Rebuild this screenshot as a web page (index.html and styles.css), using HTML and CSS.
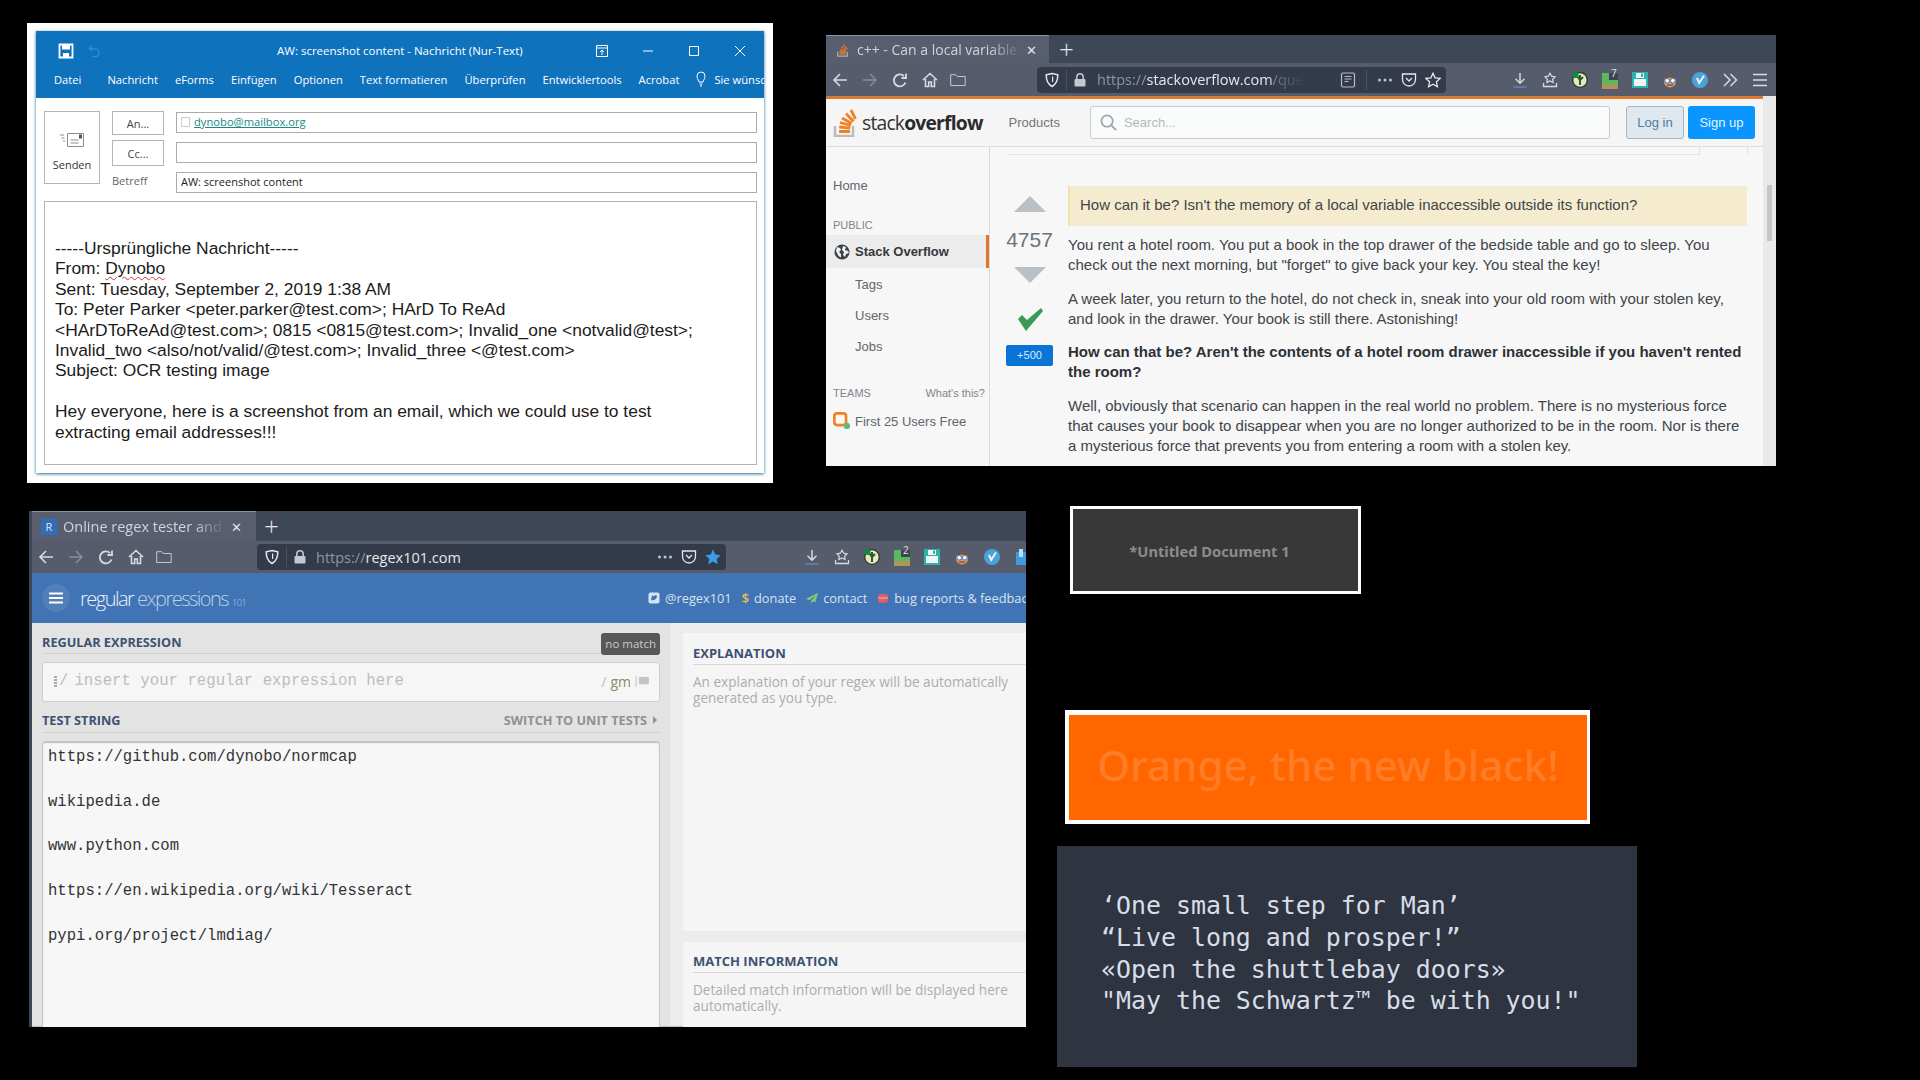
FILE: index.html
```html
<!DOCTYPE html>
<html lang="en">
<head>
  <meta charset="UTF-8" />
  <title>Screenshot content</title>
  <link rel="stylesheet" href="styles.css">
</head>
<body>
  <!-- shared icons -->
  <svg class="defs" width="0" height="0">
    <symbol id="i-back" viewBox="0 0 16 16"><path d="M15 8H2M8 2L2 8l6 6" fill="none" stroke="currentColor" stroke-width="1.6"/></symbol>
    <symbol id="i-forward" viewBox="0 0 16 16"><path d="M1 8h13M8 2l6 6-6 6" fill="none" stroke="currentColor" stroke-width="1.4"/></symbol>
    <symbol id="i-reload" viewBox="0 0 16 16"><path d="M13.5 10.5A6 6 0 1 1 12 4M9.5 6H14V1.5" fill="none" stroke="currentColor" stroke-width="1.8"/></symbol>
    <symbol id="i-home" viewBox="0 0 16 16"><path d="M1 8l7-6.5L15 8M3.5 7v7.5h3.2V10h2.6v4.5h3.200V7" fill="none" stroke="currentColor" stroke-width="1.6"/></symbol>
    <symbol id="i-folder" viewBox="0 0 16 16"><path d="M.7 2.700h5l1.500 1.800h8v9H.7z" fill="none" stroke="currentColor" stroke-width="1"/></symbol>
    <symbol id="i-shield" viewBox="0 0 16 16"><path d="M8 1.500l5.800 1.300c0 5.500-1.500 9.500-5.800 11.700C3.700 12.300 2.200 8.300 2.200 2.800z" fill="none" stroke="currentColor" stroke-width="1.500"/><path d="M8 4.500h1.200v5.500H8z" fill="currentColor"/></symbol>
    <symbol id="i-lock" viewBox="0 0 16 16"><path d="M4.800 7V5a3.200 3.200 0 0 1 6.400 0v2" fill="none" stroke="currentColor" stroke-width="1.500"/><rect x="2.500" y="7" width="11" height="7.500" rx="1" fill="currentColor"/></symbol>
    <symbol id="i-dots" viewBox="0 0 16 16"><circle cx="2.500" cy="8" r="1.500" fill="currentColor"/><circle cx="8" cy="8" r="1.500" fill="currentColor"/><circle cx="13.500" cy="8" r="1.500" fill="currentColor"/></symbol>
    <symbol id="i-pocket" viewBox="0 0 16 16"><path d="M1.500 2h13v5.500a6.500 6.500 0 0 1-13 0z" fill="none" stroke="currentColor" stroke-width="1.300"/><path d="M5 6l3 3 3-3" fill="none" stroke="currentColor" stroke-width="1.300"/></symbol>
    <symbol id="i-star" viewBox="0 0 16 16"><path d="M8 1.200l2.100 4.600 5 .6-3.700 3.400 1 4.900L8 12.300 3.600 14.700l1-4.900L.9 6.400l5-.6z" fill="none" stroke="currentColor" stroke-width="1.300"/></symbol>
    <symbol id="i-star-full" viewBox="0 0 16 16"><path d="M8 .6l2.300 4.900 5.300.7-3.900 3.700 1 5.300L8 12.600l-4.700 2.600 1-5.300L.4 6.200l5.300-.7z" fill="currentColor"/></symbol>
    <symbol id="i-reader" viewBox="0 0 16 16"><rect x="1.500" y="1" width="13" height="14" rx="1.500" fill="none" stroke="currentColor" stroke-width="1.200"/><path d="M4.500 4.500h7M4.500 7h7M4.500 9.500h4" stroke="currentColor" stroke-width="1"/></symbol>
    <symbol id="i-download" viewBox="0 0 16 16"><path d="M8 1v10M3.500 6.800L8 11.300l4.500-4.500" fill="none" stroke="#d7dae0" stroke-width="1.500"/><path d="M1.500 15h13" stroke="#5a8fc8" stroke-width="1.300"/></symbol>
    <symbol id="i-library" viewBox="0 0 16 16"><path d="M8 1.200l1.700 3 3.300.6-2.300 2.500.4 3.200L8 9l-3.100 1.500.4-3.200L3 4.800l3.300-.6z" fill="none" stroke="#d7dae0" stroke-width="1.200"/><path d="M1.500 11v3.500h13V11" fill="none" stroke="#d7dae0" stroke-width="1.300"/></symbol>
    <symbol id="i-ext-green" viewBox="0 0 16 16"><circle cx="8" cy="8" r="7.300" fill="#e8e6c8"/><circle cx="8" cy="8" r="7.300" fill="none" stroke="#2e3a20" stroke-width="1.300"/><path d="M8 3v10M5 4l3 4 3-3" fill="none" stroke="#2c5a28" stroke-width="2"/><circle cx="3.500" cy="3" r="3" fill="#0d8a43"/></symbol>
    <symbol id="i-ext-blocks" viewBox="0 0 16 16"><path d="M0 0h8v7h8v9H0z" fill="#5cb85c"/><path d="M0 11h16v5H0z" fill="#c98a5c" opacity=".75"/><rect x="7" y="-1" width="9" height="8" fill="#3d4452"/></symbol>
    <symbol id="i-ext-save" viewBox="0 0 16 16"><path d="M0 0h16v16H0z" fill="#2bb4a8"/><path d="M2 7h12v7H2z" fill="#f1f5f7"/><path d="M4 1h8v5H4z" fill="#f1f5f7"/><path d="M9 1.500h2v3.500H9z" fill="#2bb4a8"/></symbol>
    <symbol id="i-ext-nerd" viewBox="0 0 16 16"><circle cx="8" cy="9.500" r="6" fill="#d69a6a"/><path d="M2.500 6.500C3 2.500 13 2.500 13.500 6.500 10 5 6 5 2.500 6.500z" fill="#7a4a28"/><circle cx="5.200" cy="8.700" r="2.300" fill="#fff" stroke="#3a7bd0"/><circle cx="10.800" cy="8.700" r="2.300" fill="#fff" stroke="#3a7bd0"/><path d="M5 13h6" stroke="#8a3b2a" stroke-width="1.200"/></symbol>
    <symbol id="i-ext-v" viewBox="0 0 16 16"><circle cx="8" cy="8" r="8" fill="#4aa3d8"/><path d="M5 6l2.200 5L12 3.500" fill="none" stroke="#eaf4fb" stroke-width="2"/></symbol>
    <symbol id="i-ext-cube" viewBox="0 0 16 16"><path d="M2 3h12v13H2z" fill="#3d9be0"/><path d="M5 0h4v8H5z" fill="#b9def7"/></symbol>
    <symbol id="i-chevrons" viewBox="0 0 16 16"><path d="M2 2l6 6-6 6M8.500 2l6 6-6 6" fill="none" stroke="#d7dae0" stroke-width="1.500"/></symbol>
    <symbol id="i-menu" viewBox="0 0 16 16"><path d="M1 2.500h14M1 8h14M1 13.500h14" stroke="#d7dae0" stroke-width="1.600"/></symbol>
  </svg>

  <div class="desktop">

    <!-- Outlook message -->
    <section class="mail-frame">
      <div class="mail-window">
        <div class="mail-title">
          <svg class="mail-save" viewBox="0 0 16 16"><path d="M1.500 1.500h13v13h-13z" fill="none" stroke="#fff" stroke-width="1.800"/><path d="M4 2h8v4.500H4zM5 10h6v4.500H5z" fill="#fff"/></svg>
          <svg class="mail-undo" viewBox="0 0 16 16"><path d="M4 2L1.500 5.500 5 8M2 5.500h6a4.500 4.500 0 0 1 0 9H5" fill="none" stroke="#2f8fd8" stroke-width="1.500"/></svg>
          <span class="mail-title-text">AW: screenshot content - Nachricht (Nur-Text)</span>
          <svg class="win-btn win-ribbon" viewBox="0 0 12 12"><path d="M.5.500h11v11H.5zM.5 3h11M6 10V5M4 7l2-2 2 2" fill="none" stroke="#fff"/></svg>
          <svg class="win-btn win-min" viewBox="0 0 12 12"><path d="M1 6h10" stroke="#fff"/></svg>
          <svg class="win-btn win-max" viewBox="0 0 12 12"><path d="M1.500 1.500h9v9h-9z" fill="none" stroke="#fff"/></svg>
          <svg class="win-btn win-close" viewBox="0 0 12 12"><path d="M1 1l10 10M11 1L1 11" stroke="#fff"/></svg>
        </div>
        <nav class="mail-menu">
          <span class="file-tab">Datei</span>
          <span>Nachricht</span>
          <span>eForms</span>
          <span>Einfügen</span>
          <span>Optionen</span>
          <span>Text formatieren</span>
          <span>Überprüfen</span>
          <span>Entwicklertools</span>
          <span>Acrobat</span>
          <span class="tell-me">
            <svg viewBox="0 0 10 16"><path d="M3 11C2 8 1 7.500 1 5a4 4 0 0 1 8 0c0 2.500-1 3-2 6zM3.500 13h3M4 15h2" fill="none" stroke="#fff"/></svg>
            Sie wünsche
          </span>
        </nav>
        <div class="compose">
          <div class="compose-head">
            <div class="send-btn">
              <svg viewBox="0 0 24 16"><path d="M7.500 1.500h16v13h-16z" fill="#fff" stroke="#8a8a8a"/><path d="M10.500 8h8M10.500 11h8" stroke="#8a8a8a"/><rect x="19" y="2.500" width="3" height="4" fill="#555"/><path d="M0 3h4M1.500 6h3M3 9h2" stroke="#8a8a8a"/></svg>
              <span>Senden</span>
            </div>
            <div class="addr-grid">
              <button class="addr-btn addr-to">An...</button>
              <div class="addr-field"><i class="addr-check"></i><a class="addr-link">dynobo@mailbox.org</a></div>
              <button class="addr-btn addr-cc">Cc...</button>
              <div class="addr-field"></div>
              <span class="addr-label">Betreff</span>
              <div class="addr-field">AW: screenshot content</div>
            </div>
          </div>
          <div class="mail-body">
            -----Ursprüngliche Nachricht-----<br>
            From: <span class="spell">Dynobo</span><br>
            Sent: Tuesday, September 2, 2019 1:38 AM<br>
            To: Peter Parker &lt;peter.parker@test.com&gt;; HArD To ReAd<br>
            &lt;HArDToReAd@test.com&gt;; 0815 &lt;0815@test.com&gt;; Invalid_one &lt;notvalid@test&gt;;<br>
            Invalid_two &lt;also/not/valid/@test.com&gt;; Invalid_three &lt;@test.com&gt;<br>
            Subject: OCR testing image<br>
            <br>
            Hey everyone, here is a screenshot from an email, which we could use to test<br>
            extracting email addresses!!!
          </div>
        </div>
      </div>
    </section>

    <!-- Firefox: stack overflow -->
    <section class="browser browser-so">
      <div class="tabstrip">
        <div class="tab">
          <svg class="tab-icon" viewBox="0 0 16 16"><path d="M2 10v5h11v-5" fill="none" stroke="#a9acb0" stroke-width="1.500"/><path d="M4 12.500h7M4 10l7 .8M4.500 7.500l6.800 2M6 4.500l6 3.500M8.500 2l4.500 5" stroke="#d8792f" stroke-width="1.600"/></svg>
          <span class="tab-text">c++ - Can a local variable</span>
          <span class="tab-close">✕</span>
        </div>
        <span class="tab-new">+</span>
      </div>
      <div class="toolbar">
        <svg class="ico"><use href="#i-back"/></svg>
        <svg class="ico ico-dim"><use href="#i-forward"/></svg>
        <svg class="ico"><use href="#i-reload"/></svg>
        <svg class="ico"><use href="#i-home"/></svg>
        <svg class="ico ico-folder"><use href="#i-folder"/></svg>
        <div class="urlbar">
          <svg class="ico"><use href="#i-shield"/></svg>
          <i class="url-sep"></i>
          <svg class="ico ico-lock"><use href="#i-lock"/></svg>
          <span class="url-text"><span class="url-scheme">https://</span>stackoverflow.com<span class="url-scheme">/ques</span></span>
          <svg class="ico ico-reader"><use href="#i-reader"/></svg>
          <i class="url-sep url-sep-right"></i>
          <svg class="ico ico-dots"><use href="#i-dots"/></svg>
          <svg class="ico"><use href="#i-pocket"/></svg>
          <svg class="ico"><use href="#i-star"/></svg>
        </div>
        <div class="ext-icons">
          <svg class="ico"><use href="#i-download"/></svg>
          <svg class="ico"><use href="#i-library"/></svg>
          <svg class="ico"><use href="#i-ext-green"/></svg>
          <span class="ext-badge"><svg class="ico"><use href="#i-ext-blocks"/></svg><b>7</b></span>
          <svg class="ico"><use href="#i-ext-save"/></svg>
          <svg class="ico"><use href="#i-ext-nerd"/></svg>
          <svg class="ico"><use href="#i-ext-v"/></svg>
          <svg class="ico"><use href="#i-chevrons"/></svg>
          <svg class="ico"><use href="#i-menu"/></svg>
        </div>
      </div>
      <div class="so-page">
        <div class="so-content">
          <header class="so-header">
            <svg class="so-mark" viewBox="0 0 24 30"><path d="M2 19v10h18V19" fill="none" stroke="#bcbbbb" stroke-width="2.500"/><path d="M6 24.500h11M6.200 20l11 1.200M7 15.500l10.800 3M9 11l9.500 5.500M13 6.500l7.500 8M18 3l4.500 9" stroke="#f48024" stroke-width="2.800"/></svg>
            <span class="so-word">stack<b>overflow</b></span>
            <span class="so-products">Products</span>
            <div class="so-search">
              <svg viewBox="0 0 18 18"><circle cx="7.500" cy="7.500" r="6" fill="none" stroke="#9fa6ad" stroke-width="1.800"/><path d="M12 12l5 5" stroke="#9fa6ad" stroke-width="2"/></svg>
              <span>Search...</span>
            </div>
            <span class="so-btn so-login">Log in</span>
            <span class="so-btn so-signup">Sign up</span>
          </header>
          <div class="so-columns">
            <aside class="so-side">
              <div class="side-item side-home">Home</div>
              <div class="side-label side-public">PUBLIC</div>
              <div class="side-current">
                <svg viewBox="0 0 16 16"><circle cx="8" cy="8" r="7.500" fill="#3c4146"/><path d="M3 3l3 1 1 2-2 2 2 2v3.500L4.500 12 2 7zM9 2l3 1-1 3 3 1 1 2-3 1-1 3-2-2 1-3-2-2z" fill="#f1f2f3"/></svg>
                Stack Overflow
              </div>
              <div class="side-item side-sub">Tags</div>
              <div class="side-item side-sub">Users</div>
              <div class="side-item side-sub">Jobs</div>
              <div class="side-label side-teams"><span>TEAMS</span><span class="side-whats">What's this?</span></div>
              <div class="side-team">
                <svg viewBox="0 0 20 20"><rect x="1.500" y="1.500" width="13" height="13" rx="3" fill="none" stroke="#f48024" stroke-width="3"/><circle cx="15.500" cy="15.500" r="3.500" fill="#5eba7d"/></svg>
                First 25 Users Free
              </div>
            </aside>
            <main class="so-main">
              <div class="prev-edge"></div>
              <div class="so-post">
                <div class="vote-col">
                  <i class="vote-up"></i>
                  <div class="vote-count">4757</div>
                  <i class="vote-down"></i>
                  <svg class="vote-check" viewBox="0 0 26 24"><path d="M1 12l8 12L26 4 24 1 10 13 5 8z" fill="#3a9a56"/></svg>
                  <div class="vote-bounty">+500</div>
                </div>
                <div class="post-text">
                  <blockquote class="post-quote">How can it be? Isn't the memory of a local variable inaccessible outside its function?</blockquote>
                  <p>You rent a hotel room. You put a book in the top drawer of the bedside table and go to sleep. You<br>check out the next morning, but "forget" to give back your key. You steal the key!</p>
                  <p>A week later, you return to the hotel, do not check in, sneak into your old room with your stolen key,<br>and look in the drawer. Your book is still there. Astonishing!</p>
                  <p><strong>How can that be? Aren't the contents of a hotel room drawer inaccessible if you haven't rented<br>the room?</strong></p>
                  <p>Well, obviously that scenario can happen in the real world no problem. There is no mysterious force<br>that causes your book to disappear when you are no longer authorized to be in the room. Nor is there<br>a mysterious force that prevents you from entering a room with a stolen key.</p>
                </div>
              </div>
            </main>
          </div>
        </div>
        <div class="so-scroll"><i></i></div>
      </div>
    </section>

    <!-- Firefox: regex101 -->
    <section class="browser browser-regex">
      <div class="tabstrip">
        <div class="tab">
          <span class="tab-r">R</span>
          <span class="tab-text">Online regex tester and debugger</span>
          <span class="tab-close">✕</span>
        </div>
        <span class="tab-new">+</span>
      </div>
      <div class="toolbar">
        <svg class="ico"><use href="#i-back"/></svg>
        <svg class="ico ico-dim"><use href="#i-forward"/></svg>
        <svg class="ico"><use href="#i-reload"/></svg>
        <svg class="ico"><use href="#i-home"/></svg>
        <svg class="ico ico-folder"><use href="#i-folder"/></svg>
        <div class="urlbar">
          <svg class="ico"><use href="#i-shield"/></svg>
          <i class="url-sep"></i>
          <svg class="ico ico-lock"><use href="#i-lock"/></svg>
          <span class="url-text"><span class="url-scheme">https://</span>regex101.com</span>
          <svg class="ico ico-dots"><use href="#i-dots"/></svg>
          <svg class="ico"><use href="#i-pocket"/></svg>
          <svg class="ico ico-star-on"><use href="#i-star-full"/></svg>
        </div>
        <div class="ext-icons">
          <svg class="ico"><use href="#i-download"/></svg>
          <svg class="ico"><use href="#i-library"/></svg>
          <svg class="ico"><use href="#i-ext-green"/></svg>
          <span class="ext-badge"><svg class="ico"><use href="#i-ext-blocks"/></svg><b>2</b></span>
          <svg class="ico"><use href="#i-ext-save"/></svg>
          <svg class="ico"><use href="#i-ext-nerd"/></svg>
          <svg class="ico"><use href="#i-ext-v"/></svg>
          <svg class="ico"><use href="#i-ext-cube"/></svg>
        </div>
      </div>
      <header class="rx-header">
        <span class="rx-burger"><svg viewBox="0 0 14 12"><path d="M0 1.500h14M0 6h14M0 10.500h14" stroke="#fff" stroke-width="2"/></svg></span>
        <span class="rx-logo"><span class="rx-logo-strong">regular</span> expressions <small>101</small></span>
        <span class="rx-links">
          <span class="rx-link"><svg viewBox="0 0 12 12"><rect x=".500" y=".500" width="11" height="11" rx="2" fill="#d6e4f3"/><path d="M3 8c3 1 6-1 6-4L8 3 6 4 4 3.500z" fill="#4174b5"/></svg>@regex101</span>
          <span class="rx-link"><b class="rx-dollar">$</b>donate</span>
          <span class="rx-link"><svg viewBox="0 0 14 12"><path d="M14 0L0 7l4 1.500L11 3 6 9.500V12l2.500-2L11 11z" fill="#7fc77f"/></svg>contact</span>
          <span class="rx-link"><svg viewBox="0 0 12 12"><rect x="1" y="2" width="10" height="9" rx="3" fill="#d9606a"/><path d="M1 6h10" stroke="#f2b3b8"/></svg>bug reports &amp; feedback</span>
        </span>
      </header>
      <div class="rx-columns">
        <div class="rx-left">
          <div class="rx-head">
            <h3>REGULAR EXPRESSION</h3>
            <span class="rx-nomatch">no match</span>
          </div>
          <div class="rx-input">
            <i class="rx-grip"></i>
            <span class="rx-delim">/</span>
            <span class="rx-placeholder">insert your regular expression here</span>
            <span class="rx-flags"><span class="rx-delim">/</span> <span class="rx-gm">gm</span>
              <svg viewBox="0 0 16 12"><path d="M1 0v12" stroke="#bbb"/><path d="M4 1h11v8H4z" fill="#c4c4c4"/></svg>
            </span>
          </div>
          <div class="rx-head rx-head-test">
            <h3>TEST STRING</h3>
            <span class="rx-switch">SWITCH TO UNIT TESTS <i></i></span>
          </div>
          <div class="rx-test">https://github.com/dynobo/normcap

wikipedia.de

www.python.com

https://en.wikipedia.org/wiki/Tesseract

pypi.org/project/lmdiag/</div>
        </div>
        <div class="rx-right">
          <div class="rx-card rx-card-explain">
            <h3>EXPLANATION</h3>
            <p>An explanation of your regex will be automatically<br>generated as you type.</p>
          </div>
          <div class="rx-card rx-card-match">
            <h3>MATCH INFORMATION</h3>
            <p>Detailed match information will be displayed here<br>automatically.</p>
          </div>
        </div>
      </div>
    </section>

    <section class="doc-tile">*Untitled Document 1</section>
    <section class="orange-tile">Orange, the new black!</section>
    <section class="quote-tile">‘One small step for Man’<br>“Live long and prosper!”<br>«Open the shuttlebay doors»<br>"May the Schwartz™ be with you!"</section>

  </div>
</body>
</html>
```

FILE: styles.css
```css
* {
  box-sizing: border-box;
}
body {
  margin: 0;
  background: #000;
  font-family: 'Liberation Sans', sans-serif;
}
.defs {
  position: absolute;
}
.desktop {
  position: relative;
  width: 1920px;
  height: 1080px;
  overflow: hidden;
}

/* Outlook */
.mail-frame {
  position: absolute;
  left: 27px;
  top: 23px;
  width: 746px;
  height: 460px;
  background: #fff;
  padding: 8px 9px 10px;
}
.mail-window {
  height: 100%;
  background: #fff;
  box-shadow: 0 1px 3px rgba(20, 90, 140, 0.9);
  font-family: 'Open Sans', sans-serif;
}
.mail-title {
  display: flex;
  align-items: center;
  height: 39px;
  background: #0f72bd;
  color: #fff;
  position: relative;
}
.mail-save {
  width: 16px;
  height: 16px;
  margin-left: 22px;
}
.mail-undo {
  width: 14px;
  height: 14px;
  margin-left: 14px;
}
.mail-title-text {
  position: absolute;
  left: 241px;
  top: 12px;
  font-size: 11.5px;
  line-height: 16px;
}
.win-btn {
  width: 12px;
  height: 12px;
}
.win-ribbon {
  margin-left: auto;
  margin-right: 34px;
}
.win-min,
.win-max {
  margin-right: 34px;
}
.win-close {
  margin-right: 18px;
}
.mail-menu {
  display: flex;
  align-items: center;
  gap: 17px;
  height: 28px;
  padding: 0 0 10px 18px;
  background: #0f72bd;
  color: #fff;
  font-size: 11.2px;
  white-space: nowrap;
  overflow: hidden;
}
.file-tab {
  margin-right: 9px;
}
.tell-me {
  display: flex;
  align-items: center;
  gap: 8px;
}
.tell-me svg {
  width: 10px;
  height: 16px;
}
.compose {
  padding: 12px 7px 0 8px;
}
.compose-head {
  display: flex;
  gap: 12px;
}
.send-btn {
  display: flex;
  flex-direction: column;
  align-items: center;
  width: 56px;
  height: 73px;
  margin-top: 1px;
  border: 1px solid #b5b5b5;
  font-size: 11px;
  color: #333;
}
.send-btn svg {
  width: 24px;
  height: 16px;
  margin-top: 20px;
}
.send-btn span {
  margin-top: 9px;
}
.addr-grid {
  flex: 1;
  display: grid;
  grid-template-columns: 52px 581px;
  grid-auto-rows: 30px;
  column-gap: 12px;
}
.addr-btn {
  padding: 0;
  background: #fff;
  border: 1px solid #b5b5b5;
  font: 11px 'Open Sans', sans-serif;
  color: #444;
}
.addr-to {
  height: 24px;
  margin-top: 1px;
}
.addr-cc {
  height: 26px;
}
.addr-field {
  display: flex;
  align-items: center;
  height: 21px;
  margin-top: 2px;
  padding: 0 0 2px 4px;
  border: 1px solid #ababab;
  font-size: 11px;
  color: #222;
}
.addr-check {
  width: 9px;
  height: 10px;
  margin-right: 4px;
  border: 1px solid #ccc;
}
.addr-link {
  color: #1b8a86;
  font-size: 11.2px;
  text-decoration: underline;
}
.addr-label {
  padding-top: 3px;
  font-size: 11px;
  color: #666;
}
.mail-body {
  height: 264px;
  margin-top: 1px;
  padding: 36px 0 0 10px;
  border: 1px solid #b4b4b4;
  font: 17.4px/20.400px 'Liberation Sans', sans-serif;
  color: #1b1b1b;
  white-space: nowrap;
}
.spell {
  text-decoration: underline wavy #d0343a 1px;
  text-underline-offset: 2px;
}

/* Firefox chrome, shared by both browsers */
.browser {
  position: absolute;
  overflow: hidden;
  font-family: 'Open Sans', sans-serif;
}
.tabstrip {
  display: flex;
  align-items: center;
  background: #3e4757;
}
.tab {
  display: flex;
  align-items: center;
  height: 100%;
  background: #585e6e;
  border-top: 1px solid #7d98a6;
  color: #cfd3da;
  font-size: 14px;
}
.tab-text {
  white-space: nowrap;
  overflow: hidden;
  -webkit-mask-image: linear-gradient(to right, #000 80%, transparent);
  mask-image: linear-gradient(to right, #000 80%, transparent);
}
.tab-close {
  font-size: 13px;
  color: #e3e5ea;
}
.tab-new {
  color: #e6e8ec;
  font-size: 26px;
  font-weight: 300;
  line-height: 1;
}
.toolbar {
  display: flex;
  align-items: center;
  gap: 14px;
  padding-left: 6px;
  background: #565c6c;
  color: #d7dae0;
}
.ico {
  flex: none;
  width: 16px;
  height: 16px;
}
.ico-dim {
  opacity: 0.4;
}
.ico-folder {
  margin-left: -2px;
  opacity: 0.85;
}
.urlbar {
  flex: none;
  display: flex;
  align-items: center;
  height: 26px;
  padding-left: 7px;
  background: #333a49;
  border-radius: 4px;
  font-size: 14.500px;
  color: #e6e8ee;
}
.url-sep {
  width: 1px;
  height: 20px;
  margin: 0 5px 0 6px;
  background: #4a5161;
}
.url-text {
  white-space: nowrap;
  overflow: hidden;
  margin-left: 9px;
}
.url-scheme {
  color: #8f95a3;
}
.ico-lock {
  color: #c4c8d0;
}
.urlbar .ico-dots {
  margin-right: 8px;
  margin-left: auto;
  color: #bfc3cc;
}
.urlbar .ico-dots + .ico {
  margin-right: 8px;
}
.ico-star-on {
  color: #3d9be9;
}
.ext-icons {
  flex: none;
  display: flex;
  gap: 14px;
}
.ext-badge {
  position: relative;
  height: 16px;
}
.ext-badge b {
  position: absolute;
  left: 9px;
  top: -6px;
  font-size: 10px;
  font-weight: 400;
  color: #e0e0e0;
}

/* Stack Overflow */
.browser-so {
  left: 826px;
  top: 35px;
  width: 950px;
  height: 431px;
}
.browser-so .tabstrip {
  height: 28px;
}
.browser-so .tab {
  width: 223px;
  padding-left: 10px;
}
.tab-icon {
  flex: none;
  width: 14px;
  height: 14px;
  margin-right: 7px;
}
.browser-so .tab-text {
  width: 165px;
}
.browser-so .tab-close {
  margin-left: 4px;
}
.browser-so .tab-new {
  margin-left: 10px;
}
.browser-so .toolbar {
  height: 33px;
}
.browser-so .urlbar {
  width: 409px;
  margin-left: 57px;
}
.browser-so .url-text {
  width: 209px;
  flex: none;
  -webkit-mask-image: linear-gradient(to right, #000 80%, transparent);
  mask-image: linear-gradient(to right, #000 80%, transparent);
}
.ico-reader {
  margin-left: 34px;
  color: #b8bcc6;
}
.url-sep-right {
  margin: 0 10px;
}
.browser-so .urlbar .ico-dots {
  margin-left: 0;
}
.browser-so .ext-icons {
  margin-left: 52px;
}
.so-page {
  display: flex;
  height: 370px;
  background: #f7f7f7;
}
.so-scroll {
  flex: none;
  width: 13px;
  padding: 89px 4px 0;
  background: #e9e9e9;
}
.so-scroll i {
  display: block;
  height: 56px;
  background: #c6c6c6;
}
.so-content {
  flex: none;
  width: 937px;
  font-family: 'Liberation Sans', sans-serif;
  color: #3e4349;
}
.so-header {
  display: flex;
  align-items: center;
  height: 51px;
  padding-left: 7px;
  background: #f5f5f5;
  border-top: 3px solid #d97a31;
  border-bottom: 1px solid #dedede;
  font-size: 13px;
}
.so-mark {
  flex: none;
  width: 24px;
  height: 30px;
  margin-top: -1px;
}
.so-word {
  margin-left: 5px;
  font: 400 19.3px 'Open Sans', sans-serif;
  letter-spacing: -0.8px;
  color: #333;
}
.so-word b {
  font-weight: 700;
  color: #2b2b2b;
}
.so-products {
  margin-left: 26px;
  color: #6f767d;
}
.so-search {
  display: flex;
  align-items: center;
  gap: 7px;
  width: 520px;
  height: 33px;
  margin-left: 30px;
  padding-left: 9px;
  background: #f9fafa;
  border: 1px solid #c8cccf;
  border-radius: 3px;
  color: #b4b9bd;
}
.so-search svg {
  width: 17px;
  height: 17px;
}
.so-btn {
  display: flex;
  align-items: center;
  justify-content: center;
  height: 33px;
  border-radius: 3px;
}
.so-login {
  width: 58px;
  margin-left: 16px;
  background: #dfe8ef;
  border: 1px solid #9fb4c5;
  color: #4c7ea3;
}
.so-signup {
  width: 67px;
  margin-left: 4px;
  background: #0a95ff;
  color: #e6f4ff;
}
.so-columns {
  display: flex;
  height: 319px;
}
.so-side {
  flex: none;
  width: 164px;
  border-right: 1px solid #d6d9dc;
  font-size: 13px;
  color: #5f666d;
}
.side-item {
  display: flex;
  align-items: center;
  height: 31px;
  padding-left: 7px;
}
.side-home {
  margin-top: 23px;
}
.side-label {
  display: flex;
  justify-content: space-between;
  align-items: center;
  height: 18px;
  padding: 0 4px 0 7px;
  font-size: 11px;
  color: #7f868c;
}
.side-public {
  margin-top: 15px;
  margin-bottom: 1px;
}
.side-current {
  display: flex;
  align-items: center;
  gap: 5px;
  height: 33px;
  margin-bottom: 1px;
  padding-left: 8px;
  background: #ececec;
  border-right: 3px solid #e0752c;
  font-weight: 700;
  color: #33383d;
}
.side-current svg {
  width: 16px;
  height: 16px;
}
.side-sub {
  padding-left: 29px;
}
.side-teams {
  margin-top: 22px;
}
.side-team {
  display: flex;
  align-items: center;
  gap: 4px;
  height: 32px;
  margin-top: 3px;
  padding-left: 7px;
}
.side-team svg {
  width: 18px;
  height: 18px;
}
.so-main {
  flex: 1;
  min-width: 0;
}
.prev-edge {
  position: relative;
  width: 693px;
  height: 8px;
  margin-left: 17px;
  border-right: 1px solid #e3e3e3;
  border-bottom: 1px solid #e3e3e3;
}
.prev-edge::after {
  content: "";
  position: absolute;
  left: 740px;
  top: 0;
  height: 8px;
  border-left: 1px solid #e3e3e3;
}
.so-post {
  display: flex;
  gap: 15px;
  padding: 0 16px;
}
.vote-col {
  flex: none;
  display: flex;
  flex-direction: column;
  align-items: center;
  width: 47px;
  padding-top: 41px;
}
.vote-up {
  border: 16px solid transparent;
  border-top: 0;
  border-bottom-color: #bbc0c4;
}
.vote-count {
  margin-top: 16px;
  font-size: 21px;
  line-height: 24px;
  color: #6a737c;
}
.vote-down {
  margin-top: 15px;
  border: 16px solid transparent;
  border-bottom: 0;
  border-top-color: #bbc0c4;
}
.vote-check {
  width: 26px;
  height: 24px;
  margin-top: 24px;
}
.vote-bounty {
  width: 47px;
  height: 21px;
  margin-top: 14px;
  background: #0a74d6;
  border-radius: 2px;
  text-align: center;
  font-size: 11px;
  line-height: 21px;
  color: #d8ecff;
}
.post-text {
  flex: 1;
  min-width: 0;
  padding-top: 31px;
  font-size: 15px;
  line-height: 20px;
  white-space: nowrap;
  color: #40454a;
}
.post-quote {
  height: 40px;
  margin: 0 0 9px;
  padding-left: 10px;
  background: #f5eccf;
  border-left: 2px solid #f2e3a8;
  line-height: 38px;
}
.post-text p {
  margin: 0 0 13.500px;
}
.post-text strong {
  color: #2d3136;
}

/* regex101 */
.browser-regex {
  left: 29px;
  top: 511px;
  width: 997px;
  height: 516px;
  border-left: 3px solid #3d4656;
}
.browser-regex .tabstrip {
  height: 30px;
}
.browser-regex .tab {
  width: 224px;
  padding-left: 9px;
}
.tab-r {
  flex: none;
  width: 16px;
  height: 16px;
  margin-right: 6px;
  background: #2f6eb8;
  text-align: center;
  font-size: 11px;
  line-height: 16px;
  color: #dde9f6;
}
.browser-regex .tab-text {
  width: 163px;
  font-size: 14.500px;
}
.browser-regex .tab-close {
  margin-left: 5px;
}
.browser-regex .tab-new {
  margin-left: 8px;
}
.browser-regex .toolbar {
  height: 32px;
}
.browser-regex .urlbar {
  width: 469px;
  margin-left: 71px;
  padding-right: 5px;
}
.browser-regex .url-text {
  margin-left: 8px;
}
.browser-regex .ext-icons {
  margin-left: 64px;
}
.rx-header {
  display: flex;
  align-items: center;
  height: 50px;
  padding-left: 10px;
  background: #4174b5;
  white-space: nowrap;
}
.rx-burger {
  display: flex;
  align-items: center;
  justify-content: center;
  width: 28px;
  height: 28px;
  border-radius: 50%;
  background: #527fb9;
}
.rx-burger svg {
  width: 14px;
  height: 12px;
}
.rx-logo {
  margin-left: 10px;
  font-size: 20px;
  font-weight: 300;
  letter-spacing: -1.500px;
  color: #bcd0e8;
}
.rx-logo-strong {
  color: #eaf1f9;
}
.rx-logo small {
  font-size: 9px;
  letter-spacing: -0.3px;
  color: #bcd0e8;
}
.rx-links {
  display: flex;
  gap: 10px;
  margin-left: auto;
  width: 378px;
  overflow: hidden;
  font-size: 12.800px;
  color: #d6e2f0;
}
.rx-link {
  display: flex;
  align-items: center;
  gap: 5px;
  flex: none;
}
.rx-link svg {
  width: 12px;
  height: 12px;
}
.rx-dollar {
  color: #e6c24a;
  font-weight: 600;
}
.rx-columns {
  display: flex;
  height: 404px;
  border-bottom: 1px solid #bdbdbd;
}
.rx-left {
  flex: none;
  width: 638px;
  padding: 0 10px;
  background: #e3e3e3;
}
.rx-head {
  display: flex;
  justify-content: space-between;
  align-items: flex-end;
  height: 31px;
  border-bottom: 1px solid #d2d2d2;
}
.rx-head h3,
.rx-card h3 {
  margin: 0;
  font-size: 13px;
  font-weight: 700;
  line-height: 18px;
  color: #3c5272;
}
.rx-head h3 {
  margin-bottom: 2px;
  font-size: 12.700px;
}
.rx-head-test h3 {
  margin-bottom: 3px;
}
.rx-nomatch {
  height: 22px;
  margin-bottom: -2px;
  padding: 0 4px;
  background: #585858;
  border-radius: 3px;
  font-size: 11.500px;
  line-height: 22px;
  color: #c8c8c8;
}
.rx-input {
  display: flex;
  align-items: center;
  height: 40px;
  margin-top: 8px;
  padding: 0 9px 2px 11px;
  background: #f6f6f6;
  border: 1px solid #cfcfcf;
  border-radius: 3px;
  font: 15.700px 'Liberation Mono', monospace;
  color: #bdbdbd;
}
.rx-grip {
  width: 3px;
  height: 11px;
  margin-right: 2px;
  background: repeating-linear-gradient(#aaa 0 2px, transparent 2px 3px);
}
.rx-placeholder {
  margin-left: 6px;
}
.rx-flags {
  display: flex;
  align-items: center;
  gap: 4px;
  margin-left: auto;
  font-family: 'Open Sans', sans-serif;
  font-size: 14px;
}
.rx-gm {
  color: #7c8f5f;
}
.rx-flags svg {
  width: 15px;
  height: 11px;
}
.rx-switch {
  display: flex;
  align-items: center;
  gap: 6px;
  margin: 0 3px 3px 0;
  font-size: 12.700px;
  font-weight: 700;
  line-height: 18px;
  color: #909090;
}
.rx-switch i {
  border: 4px solid transparent;
  border-right: 0;
  border-left-color: #909090;
}
.rx-test {
  height: 290px;
  margin-top: 8px;
  padding: 4px 0 0 5px;
  background: #f7f7f7;
  border: 1px solid #c9c9c9;
  border-bottom: 0;
  border-radius: 3px 3px 0 0;
  box-shadow: inset 0 1px 1px #bbb;
  font: 15.600px/22.350px 'Liberation Mono', monospace;
  color: #333;
  white-space: pre;
}
.rx-right {
  flex: 1;
  padding: 10px 0 0 13px;
  background: #ececec;
}
.rx-card {
  padding-left: 10px;
  background: #f5f5f5;
}
.rx-card h3 {
  padding: 11px 0 2px;
  border-bottom: 1px solid #d8d8d8;
}
.rx-card p {
  margin: 9px 0 0;
  font-size: 13.600px;
  line-height: 16px;
  white-space: nowrap;
  color: #adadad;
}
.rx-card-explain {
  height: 298px;
}
.rx-card-match {
  height: 85px;
  margin-top: 11px;
}
.rx-card-match h3 {
  padding-top: 10px;
}

/* loose tiles */
.doc-tile {
  position: absolute;
  left: 1070px;
  top: 506px;
  width: 291px;
  height: 88px;
  display: flex;
  align-items: center;
  justify-content: center;
  padding: 1px 12px 0 0;
  background: #383838;
  border: 3px solid #fff;
  font: 700 14.700px 'Noto Sans', sans-serif;
  color: #8c8c8c;
}
.orange-tile {
  position: absolute;
  left: 1065px;
  top: 710px;
  width: 525px;
  height: 114px;
  display: flex;
  align-items: center;
  justify-content: center;
  padding-bottom: 6px;
  background: #ff6600;
  border: 4px solid #fff;
  border-top-width: 5px;
  border-right-width: 3px;
  font: 500 42px 'Noto Sans', sans-serif;
  color: #ff7d26;
}
.quote-tile {
  position: absolute;
  left: 1057px;
  top: 846px;
  width: 580px;
  height: 221px;
  padding: 44px 0 0 44px;
  background: #2e3440;
  font: 24.900px/31.800px 'DejaVu Sans Mono', monospace;
  color: #d8dee9;
  white-space: nowrap;
}
```
